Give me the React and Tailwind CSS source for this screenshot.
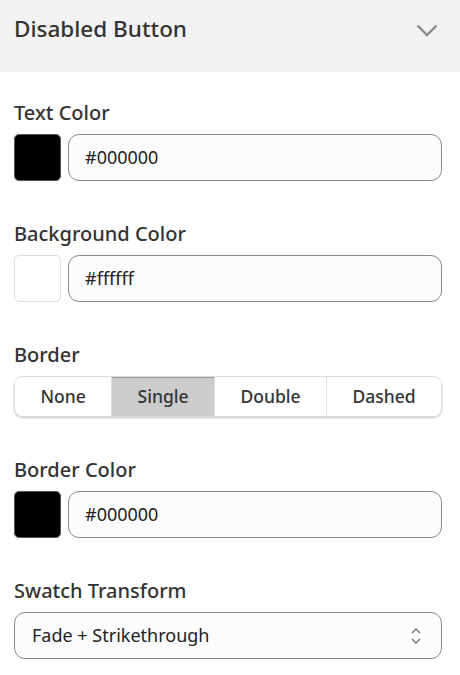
import { useState } from "react";

function ChevronDown() {
  return (
    <svg width="22" height="13" viewBox="0 0 22 13" fill="none">
      <path d="M1.5 1.5L11 11L20.5 1.5" stroke="#8a8a8a" strokeWidth="2.4" />
    </svg>
  );
}

function UpDown() {
  return (
    <svg width="10" height="20" viewBox="0 0 10 20" fill="none">
      <path d="M1 7L5 3L9 7" stroke="#777" strokeWidth="1.4" />
      <path d="M1 13L5 17L9 13" stroke="#777" strokeWidth="1.4" />
    </svg>
  );
}

function Label({ children }) {
  return (
    <div className="h-[26px] mb-[8px] text-[20px] leading-[26px] font-medium text-[#333]">
      {children}
    </div>
  );
}

function ColorField({ label, value, swatch }) {
  return (
    <div>
      <Label>{label}</Label>
      <div className="flex gap-[7px] h-[47px]">
        <div
          className={`w-[47px] h-[47px] rounded-[5px] border ${swatch === "black" ? "bg-black border-[#555]" : "bg-white border-[#ddd]"}`}
        />
        <div className="flex-1 flex items-center rounded-[11px] border border-[#8a8a8a] bg-[#fcfcfc] pl-[16px] text-[18px] text-[#222]">
          {value}
        </div>
      </div>
    </div>
  );
}

export default function App() {
  const [border, setBorder] = useState("Single");
  const opts = ["None", "Single", "Double", "Dashed"];

  return (
    <div
      className="w-[460px] h-[675px] bg-white overflow-hidden"
      style={{ fontFamily: '"Noto Sans", "Open Sans", sans-serif' }}
    >
      <div className="h-[72px] bg-[#f2f2f2] flex items-start justify-between pl-[14px] pr-[22px] pt-[13px]">
        <span className="text-[22.5px] leading-[32px] font-medium text-[#333]">
          Disabled Button
        </span>
        <span className="mt-[11px]">
          <ChevronDown />
        </span>
      </div>

      <div className="px-[14px] pt-[28px] flex flex-col gap-[40px] pr-[18px]">
        <ColorField label="Text Color" value="#000000" swatch="black" />
        <ColorField label="Background Color" value="#ffffff" swatch="white" />

        <div>
          <Label>Border</Label>
          <div className="flex h-[41px] rounded-[9px] border border-[#dcdcdc] shadow-[0_1px_2px_rgba(0,0,0,0.25)] overflow-hidden">
            {opts.map((o, i) => (
              <button
                key={o}
                onClick={() => setBorder(o)}
                className={`flex-auto px-[25px] text-[17.5px] font-medium text-[#333] ${i > 0 ? "border-l border-[#dedede]" : ""} ${border === o ? "bg-[#cccccc] shadow-[inset_0_1px_0_#9a9a9a]" : "bg-white"}`}
              >
                {o}
              </button>
            ))}
          </div>
        </div>

        <ColorField label="Border Color" value="#000000" swatch="black" />

        <div>
          <Label>Swatch Transform</Label>
          <div className="h-[47px] flex items-center justify-between rounded-[11px] border border-[#8a8a8a] bg-[#fcfcfc] pl-[17px] pr-[20px] text-[18px] text-[#222]">
            <span>Fade + Strikethrough</span>
            <UpDown />
          </div>
        </div>
      </div>
    </div>
  );
}
